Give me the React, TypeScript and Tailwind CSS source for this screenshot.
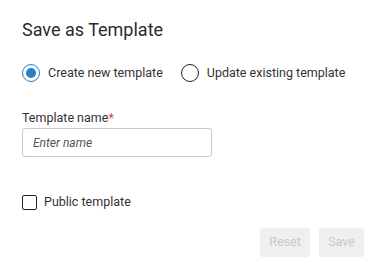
import React from "react";

export default function App() {
  return (
    <div className="w-[384px] h-[275px] bg-white rounded-[4px] relative overflow-hidden" style={{ fontFamily: "Roboto, 'Liberation Sans', sans-serif" }}>
      <div className="pl-[22px] pr-[20px] pt-[18px]">
        <h1 className="text-[18px] leading-[24px] text-[#2b2b2b] font-normal">Save as Template</h1>
        <div className="mt-[21px] flex items-center h-[20px]">
          <label className="flex items-center">
            <span className="w-[18px] h-[18px] rounded-full border-[1.5px] border-[#2a80c5] flex items-center justify-center">
              <span className="w-[10px] h-[10px] rounded-full bg-[#2a80c5]" />
            </span>
            <span className="ml-[8px] text-[12.5px] text-[#333]">Create new template</span>
          </label>
          <label className="flex items-center ml-[18px]">
            <span className="w-[18px] h-[18px] rounded-full border-[1.5px] border-[#222]" />
            <span className="ml-[8px] text-[12.5px] text-[#333]">Update existing template</span>
          </label>
        </div>
        <div className="mt-[27px]">
          <div className="text-[12.5px] leading-[16px] text-[#333]">
            Template name<span className="text-[#e8384f]">*</span>
          </div>
          <div className="mt-[2px] w-[190px] h-[29px] border border-[#c8c8c8] rounded-[3px] flex items-center px-[10px]">
            <span className="text-[12px] italic text-[#555]">Enter name</span>
          </div>
        </div>
        <label className="mt-[36px] flex items-center">
          <span className="w-[15px] h-[15px] border-[1.5px] border-[#222] rounded-[2px]" />
          <span className="ml-[7px] text-[12.5px] text-[#333]">Public template</span>
        </label>
        <div className="mt-[16px] flex justify-end gap-[9px] pr-0">
          <button className="w-[50px] h-[29px] rounded-[3px] bg-[#efefef] text-[12.5px] text-[#c9c9c9]">Reset</button>
          <button className="w-[45px] h-[29px] rounded-[3px] bg-[#efefef] text-[12.5px] text-[#c9c9c9]">Save</button>
        </div>
      </div>
    </div>
  );
}
